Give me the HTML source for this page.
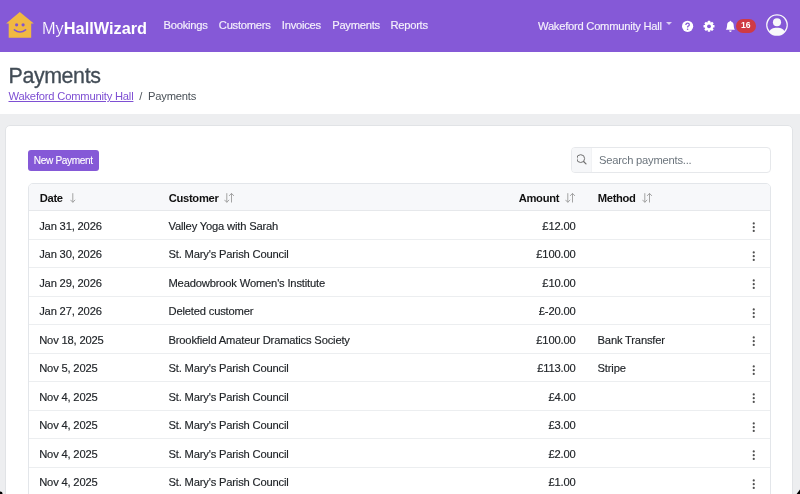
<!DOCTYPE html>
<html><head><meta charset="utf-8">
<style>
*{box-sizing:border-box;margin:0;padding:0}
html,body{width:800px;height:494px;overflow:hidden}
body{background:#edeef0;will-change:transform;font-family:"Liberation Sans",sans-serif;color:#212529;position:relative}
.abs{position:absolute;white-space:nowrap}
#nav{position:absolute;left:0;top:0;width:800px;height:52px;background:#8559d7}
.nl{position:absolute;top:18px;font-size:11.2px;letter-spacing:-0.25px;line-height:14px;color:#f5f1fc;-webkit-text-stroke:0.15px #f5f1fc}
#hdr{position:absolute;left:0;top:52px;width:800px;height:62.4px;background:#fff}
#title{position:absolute;left:8.5px;top:62.8px;font-size:21.4px;letter-spacing:-0.39px;line-height:26px;color:#424c56;-webkit-text-stroke:0.3px #424c56}
#bc{position:absolute;left:8.5px;top:89px;font-size:11.2px;letter-spacing:-0.2px;line-height:14px;color:#495057}
#bc a{color:#7e4fd3;text-decoration:underline}
#card{position:absolute;left:5.4px;top:125.4px;width:787.4px;height:400px;background:#fff;border:1.1px solid #e1e3e6;border-radius:5px}
#btn{position:absolute;left:28px;top:149.5px;width:70.5px;height:21px;background:#8559d7;border-radius:3px;color:#fff;font-size:10.1px;letter-spacing:-0.37px;line-height:22.6px;text-align:center;-webkit-text-stroke:0.1px #fff}
#srch{position:absolute;left:571px;top:147.4px;width:199.5px;height:25.4px;border:1px solid #e6e8eb;border-radius:4px;background:#fff}
#srch .ad{position:absolute;left:0;top:0;width:20px;height:23.5px;background:#f6f7f9;border-right:1px solid #f1f2f4;border-radius:3px 0 0 3px}
#srch .ph{position:absolute;left:27px;top:5.3px;font-size:11.2px;letter-spacing:-0.22px;line-height:13px;color:#6c757d}
#tbl{position:absolute;left:27.7px;top:183.4px;width:743.2px;height:330px;border:1px solid #e3e6ea;border-radius:5px;overflow:hidden;background:#fff}
#th{position:absolute;left:0;top:0;width:100%;height:26.5px;background:#f7f8fa;border-bottom:1.5px solid #e6e8eb}
.hc{position:absolute;top:6.9px;font-size:11.2px;letter-spacing:-0.3px;line-height:14px;font-weight:bold;color:#111}
.srt{position:absolute;top:8.8px}
.srt path{fill:none;stroke:#9a9a9a;stroke-width:0.9}
.row{position:absolute;left:0;width:100%;height:28.5px;border-bottom:1px solid #eceef0}
.c{position:absolute;top:7.6px;font-size:11.2px;letter-spacing:-0.18px;-webkit-text-stroke:0.15px #212529;line-height:14px;color:#212529;white-space:nowrap}
.amt{right:194.4px;text-align:right}
.keb{position:absolute;left:721.6px;top:9px}
</style></head><body>
<div id="nav">
  <svg class="abs" style="left:0;top:0" width="40" height="52" viewBox="0 0 40 52">
    <path d="M19.8 12 L33.8 23.6 L31.2 23.6 L31.2 37.8 L8.7 37.8 L8.7 23.6 L6.1 23.6 Z" fill="#f1b842"/>
    <circle cx="16.6" cy="24.8" r="1.6" fill="#8155cf"/>
    <circle cx="23.1" cy="24.8" r="1.6" fill="#8155cf"/>
    <path d="M14.4 29.8 Q20 34.2 25.6 29.8" stroke="#8155cf" stroke-width="1.5" fill="none" stroke-linecap="round"/>
  </svg>
  <div class="abs" style="left:41.5px;top:17.2px;font-size:17.2px;line-height:22px;color:#fff;transform:scaleX(0.95);transform-origin:0 0"><span style="font-weight:normal;-webkit-text-stroke:0.2px #8559d7">My</span><span style="font-weight:bold">HallWizard</span></div>
  <div class="nl" style="left:163.5px">Bookings</div>
  <div class="nl" style="left:218.8px">Customers</div>
  <div class="nl" style="left:281.8px">Invoices</div>
  <div class="nl" style="left:332.2px">Payments</div>
  <div class="nl" style="left:390.4px">Reports</div>
  <div class="nl" style="left:538px;top:18.8px">Wakeford Community Hall</div>
  <svg class="abs" style="left:664px;top:20px" width="10" height="8"><path d="M2 2 L8 2 L5 5 Z" fill="#d9ccf3"/></svg>
  <!-- help -->
  <svg class="abs" style="left:681px;top:20px" width="14" height="13" viewBox="0 0 14 13">
    <circle cx="6.6" cy="6.3" r="5.6" fill="#fff"/>
    <path d="M4.9 4.9 Q4.9 3.2 6.6 3.2 Q8.3 3.2 8.3 4.7 Q8.3 5.7 7.2 6.2 Q6.6 6.5 6.6 7.4" stroke="#8559d7" stroke-width="1.3" fill="none"/>
    <circle cx="6.6" cy="9.2" r="0.8" fill="#8559d7"/>
  </svg>
  <!-- gear -->
  <svg class="abs" style="left:702px;top:20px" width="14" height="14" viewBox="-7 -6.3 14 14">
    <g fill="#fff">
      <circle r="4.3"/>
      <rect x="-1.25" y="-5.5" width="2.5" height="11" rx="0.5"/>
      <rect x="-1.25" y="-5.5" width="2.5" height="11" rx="0.5" transform="rotate(45)"/>
      <rect x="-1.25" y="-5.5" width="2.5" height="11" rx="0.5" transform="rotate(90)"/>
      <rect x="-1.25" y="-5.5" width="2.5" height="11" rx="0.5" transform="rotate(135)"/>
    </g>
    <circle r="1.9" fill="#8559d7"/>
  </svg>
  <!-- bell -->
  <svg class="abs" style="left:725px;top:20px" width="10.5" height="12.5" viewBox="-0.22 -1.04 16 17.86" preserveAspectRatio="none">
    <path fill="#fff" d="M8 16a2 2 0 0 0 2-2H6a2 2 0 0 0 2 2m.995-14.901a1 1 0 1 0-1.99 0A5 5 0 0 0 3 6c0 1.098-.5 6-2 7h14c-1.5-1-2-5.902-2-7 0-2.42-1.72-4.44-4.005-4.901"/>
  </svg>
  <div class="abs" style="left:736px;top:19.2px;width:19.5px;height:13.6px;border-radius:7px;background:#cf3a44;color:#fff;font-size:8.6px;font-weight:bold;line-height:13.6px;text-align:center">16</div>
  <!-- avatar -->
  <svg class="abs" style="left:766px;top:14px" width="22" height="22" viewBox="-0.1 -0.1 16.2 16.2">
    <path fill="#f8f9fa" d="M11 6a3 3 0 1 1-6 0 3 3 0 0 1 6 0"/>
    <path fill="#f8f9fa" fill-rule="evenodd" d="M0 8a8 8 0 1 1 16 0A8 8 0 0 1 0 8m8-7a7 7 0 0 0-5.468 11.37C3.242 11.226 4.805 10 8 10s4.757 1.225 5.468 2.37A7 7 0 0 0 8 1"/>
  </svg>
</div>
<div id="hdr"></div>
<div id="title" class="abs">Payments</div>
<div id="bc" class="abs"><a>Wakeford Community Hall</a>&nbsp; /&nbsp; Payments</div>
<div id="card"></div>
<div id="btn">New Payment</div>
<div id="srch">
  <div class="ad">
    <svg class="abs" style="left:5px;top:6px" width="11" height="11" viewBox="0 0 11 11">
      <circle cx="3.7" cy="4.6" r="3.9" fill="none" stroke="#707070" stroke-width="1"/>
      <path d="M6.6 7.5 L9 9.9" stroke="#707070" stroke-width="1.2" stroke-linecap="round"/>
    </svg>
  </div>
  <div class="ph">Search payments...</div>
</div>
<div id="tbl">
  <div id="th">
    <div class="hc" style="left:11px">Date</div>
    <div class="hc" style="left:140px">Customer</div>
    <div class="hc" style="left:490px">Amount</div>
    <div class="hc" style="left:569px">Method</div>
    <svg class="srt" style="left:41.7px" width="12" height="11" viewBox="0 0 12 11"><path d="M2.8 0.2V9.3M0.4 6.8L2.8 9.3L5.2 6.8" /></svg>
    <svg class="srt" style="left:195.5px" width="12" height="11" viewBox="0 0 12 11"><path d="M2.8 0.2V9.3M0.4 6.8L2.8 9.3L5.2 6.8M7.5 9.5V0.4M5.1 2.9L7.5 0.4L9.9 2.9" /></svg>
    <svg class="srt" style="left:536.2px" width="12" height="11" viewBox="0 0 12 11"><path d="M2.8 0.2V9.3M0.4 6.8L2.8 9.3L5.2 6.8M7.5 9.5V0.4M5.1 2.9L7.5 0.4L9.9 2.9" /></svg>
    <svg class="srt" style="left:613.4px" width="12" height="11" viewBox="0 0 12 11"><path d="M2.8 0.2V9.3M0.4 6.8L2.8 9.3L5.2 6.8M7.5 9.5V0.4M5.1 2.9L7.5 0.4L9.9 2.9" /></svg>
  </div>
  <div id="rows">
  <div class="row" style="top:26.8px"><div class="c" style="left:10.5px">Jan 31, 2026</div><div class="c" style="left:139.8px">Valley Yoga with Sarah</div><div class="c amt">£12.00</div><div class="c" style="left:568.9px"></div><svg class="keb" width="8" height="14"><circle cx="3.75" cy="3.45" r="1.1" fill="#505050"/><circle cx="3.75" cy="7.2" r="1.1" fill="#505050"/><circle cx="3.75" cy="10.95" r="1.1" fill="#505050"/></svg></div>
  <div class="row" style="top:55.3px"><div class="c" style="left:10.5px">Jan 30, 2026</div><div class="c" style="left:139.8px">St. Mary's Parish Council</div><div class="c amt">£100.00</div><div class="c" style="left:568.9px"></div><svg class="keb" width="8" height="14"><circle cx="3.75" cy="3.45" r="1.1" fill="#505050"/><circle cx="3.75" cy="7.2" r="1.1" fill="#505050"/><circle cx="3.75" cy="10.95" r="1.1" fill="#505050"/></svg></div>
  <div class="row" style="top:83.8px"><div class="c" style="left:10.5px">Jan 29, 2026</div><div class="c" style="left:139.8px">Meadowbrook Women's Institute</div><div class="c amt">£10.00</div><div class="c" style="left:568.9px"></div><svg class="keb" width="8" height="14"><circle cx="3.75" cy="3.45" r="1.1" fill="#505050"/><circle cx="3.75" cy="7.2" r="1.1" fill="#505050"/><circle cx="3.75" cy="10.95" r="1.1" fill="#505050"/></svg></div>
  <div class="row" style="top:112.3px"><div class="c" style="left:10.5px">Jan 27, 2026</div><div class="c" style="left:139.8px">Deleted customer</div><div class="c amt">£-20.00</div><div class="c" style="left:568.9px"></div><svg class="keb" width="8" height="14"><circle cx="3.75" cy="3.45" r="1.1" fill="#505050"/><circle cx="3.75" cy="7.2" r="1.1" fill="#505050"/><circle cx="3.75" cy="10.95" r="1.1" fill="#505050"/></svg></div>
  <div class="row" style="top:140.8px"><div class="c" style="left:10.5px">Nov 18, 2025</div><div class="c" style="left:139.8px">Brookfield Amateur Dramatics Society</div><div class="c amt">£100.00</div><div class="c" style="left:568.9px">Bank Transfer</div><svg class="keb" width="8" height="14"><circle cx="3.75" cy="3.45" r="1.1" fill="#505050"/><circle cx="3.75" cy="7.2" r="1.1" fill="#505050"/><circle cx="3.75" cy="10.95" r="1.1" fill="#505050"/></svg></div>
  <div class="row" style="top:169.3px"><div class="c" style="left:10.5px">Nov 5, 2025</div><div class="c" style="left:139.8px">St. Mary's Parish Council</div><div class="c amt">£113.00</div><div class="c" style="left:568.9px">Stripe</div><svg class="keb" width="8" height="14"><circle cx="3.75" cy="3.45" r="1.1" fill="#505050"/><circle cx="3.75" cy="7.2" r="1.1" fill="#505050"/><circle cx="3.75" cy="10.95" r="1.1" fill="#505050"/></svg></div>
  <div class="row" style="top:197.8px"><div class="c" style="left:10.5px">Nov 4, 2025</div><div class="c" style="left:139.8px">St. Mary's Parish Council</div><div class="c amt">£4.00</div><div class="c" style="left:568.9px"></div><svg class="keb" width="8" height="14"><circle cx="3.75" cy="3.45" r="1.1" fill="#505050"/><circle cx="3.75" cy="7.2" r="1.1" fill="#505050"/><circle cx="3.75" cy="10.95" r="1.1" fill="#505050"/></svg></div>
  <div class="row" style="top:226.3px"><div class="c" style="left:10.5px">Nov 4, 2025</div><div class="c" style="left:139.8px">St. Mary's Parish Council</div><div class="c amt">£3.00</div><div class="c" style="left:568.9px"></div><svg class="keb" width="8" height="14"><circle cx="3.75" cy="3.45" r="1.1" fill="#505050"/><circle cx="3.75" cy="7.2" r="1.1" fill="#505050"/><circle cx="3.75" cy="10.95" r="1.1" fill="#505050"/></svg></div>
  <div class="row" style="top:254.8px"><div class="c" style="left:10.5px">Nov 4, 2025</div><div class="c" style="left:139.8px">St. Mary's Parish Council</div><div class="c amt">£2.00</div><div class="c" style="left:568.9px"></div><svg class="keb" width="8" height="14"><circle cx="3.75" cy="3.45" r="1.1" fill="#505050"/><circle cx="3.75" cy="7.2" r="1.1" fill="#505050"/><circle cx="3.75" cy="10.95" r="1.1" fill="#505050"/></svg></div>
  <div class="row" style="top:283.3px"><div class="c" style="left:10.5px">Nov 4, 2025</div><div class="c" style="left:139.8px">St. Mary's Parish Council</div><div class="c amt">£1.00</div><div class="c" style="left:568.9px"></div><svg class="keb" width="8" height="14"><circle cx="3.75" cy="3.45" r="1.1" fill="#505050"/><circle cx="3.75" cy="7.2" r="1.1" fill="#505050"/><circle cx="3.75" cy="10.95" r="1.1" fill="#505050"/></svg></div>
  </div>
</div>
<svg class="abs" style="left:0;top:486px" width="8" height="8"><circle cx="0.2" cy="8" r="2.4" fill="#000"/></svg>
<svg class="abs" style="left:792px;top:486px" width="8" height="8"><path d="M8 3.5 L8 8 L4.6 8 Z" fill="#000"/></svg>
</body></html>
